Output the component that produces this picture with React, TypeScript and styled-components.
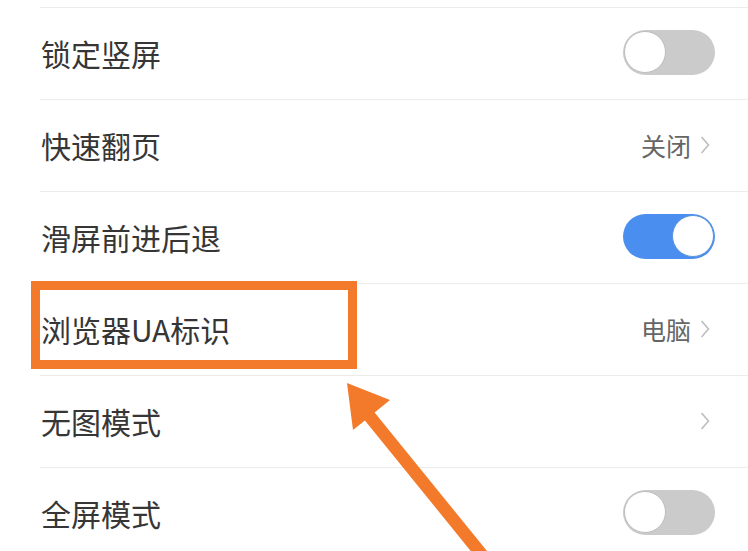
import React from "react";
import styled, { createGlobalStyle } from "styled-components";

const GlobalStyle = createGlobalStyle`
    html, body {
        margin     : 0;
        padding    : 0;
        background : #ffffff;
        height     : 551px;
        overflow   : hidden;
    }
    body {
        font-family : "Noto Sans CJK SC", "Noto Sans", sans-serif;
    }
`;

const Page = styled.div`
    position    : relative;
    width       : 748px;
    height      : 551px;
    overflow    : hidden;
    padding-top : 7px;
    box-sizing  : border-box;
`;

const List = styled.div`
    display        : flex;
    flex-direction : column;
    padding-left   : 40px;
`;

const Row = styled.div`
    position        : relative;
    height          : 92px;
    box-sizing      : border-box;
    border-top      : 1px solid #ececec;
    display         : flex;
    align-items     : center;
    justify-content : space-between;
    padding         : 0 33px 1px 1px;
    flex-shrink     : 0;
`;

const Label = styled.span`
    font-size   : 30px;
    color       : #363636;
    line-height : 1;
`;

const Value = styled.span`
    display       : flex;
    align-items   : center;
    gap           : 9px;
    font-size     : 25px;
    color         : #666666;
    line-height   : 1;
    padding-right : 5px;
`;

const Track = styled.div<{ $on: boolean }>`
    width           : 92px;
    height          : 45px;
    border-radius   : 23px;
    box-sizing      : border-box;
    background      : ${(p) => (p.$on ? "#4a8ef0" : "#cbcbcb")};
    display         : flex;
    align-items     : center;
    justify-content : ${(p) => (p.$on ? "flex-end" : "flex-start")};
    padding         : 0 1px;
    margin-top      : -2px;
`;

const Knob = styled.div<{ $on: boolean }>`
    width         : 42px;
    height        : 42px;
    border-radius : 50%;
    background    : #ffffff;
    box-sizing    : border-box;
    border        : 1px solid ${(p) => (p.$on ? "#5b93dc" : "#bdbdbd")};
`;

const Highlight = styled.div`
    position       : absolute;
    left           : -9px;
    top            : -3px;
    width          : 326px;
    height         : 88px;
    box-sizing     : border-box;
    border         : 9px solid #f47a2b;
    pointer-events : none;
`;

const Overlay = styled.svg`
    position       : absolute;
    left           : 0;
    top            : 0;
    pointer-events : none;
`;

const Chevron = () => (
    <svg width="10" height="20" viewBox="0 0 10 20">
        <path d="M1.5 2 L8.5 10 L1.5 18" fill="none" stroke="#bdbdbd" strokeWidth="1.6" />
    </svg>
);

const Toggle = ({ on }: { on: boolean }) => (
    <Track $on={on}>
        <Knob $on={on} />
    </Track>
);

type Item = {
    label   : string;
    toggle? : boolean;
    value?  : string;
    arrow?  : boolean;
    marked? : boolean;
};

const items: Item[] = [
    { label: "锁定竖屏", toggle: false },
    { label: "快速翻页", value: "关闭", arrow: true },
    { label: "滑屏前进后退", toggle: true },
    { label: "浏览器UA标识", value: "电脑", arrow: true, marked: true },
    { label: "无图模式", value: "", arrow: true },
    { label: "全屏模式", toggle: false },
];

const App = () => {
    return (
        <Page>
            <GlobalStyle />
            <List>
                {items.map((item) => (
                    <Row key={item.label}>
                        <Label>{item.label}</Label>
                        {item.toggle !== undefined
                            ? <Toggle on={item.toggle} />
                            : (
                                <Value>
                                    {item.value ? <span>{item.value}</span> : null}
                                    {item.arrow && <Chevron />}
                                </Value>
                            )}
                        {item.marked && <Highlight />}
                    </Row>
                ))}
            </List>
            <Overlay width="748" height="551" viewBox="0 0 748 551">
                <polygon
                    points="347,383 390,400 374.6,412.6 487,551 470.7,551 364.9,420.4 353,430"
                    fill="#f47a2b"
                />
            </Overlay>
        </Page>
    );
};

export default App;
